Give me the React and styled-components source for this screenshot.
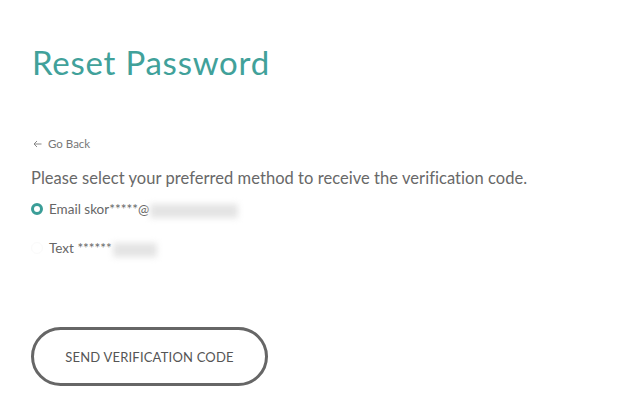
import React from 'react';
import styled, { createGlobalStyle } from 'styled-components';

const GlobalStyle = createGlobalStyle`
  html, body {
    margin: 0;
    padding: 0;
    background: #fff;
  }
  body {
    font-family: Lato, "Open Sans", sans-serif;
    color: #666;
  }
`;

const Page = styled.div`
  width: 640px;
  height: 409px;
  box-sizing: border-box;
  padding: 40px 0 0 31px;
  display: flex;
  flex-direction: column;
  overflow: hidden;
`;

const Title = styled.h1`
  margin: 0 0 0 1px;
  font-size: 33px;
  font-weight: 400;
  line-height: 44px;
  color: #41a19a;
  letter-spacing: 0.75px;
`;

const BackLink = styled.a`
  margin: 52px 0 0 2px;
  display: flex;
  align-items: center;
  gap: 6px;
  font-size: 11.5px;
  line-height: 16px;
  color: #777;
  text-decoration: none;
`;

const Intro = styled.p`
  margin: 15px 0 0;
  font-size: 16.5px;
  line-height: 22px;
  color: #686868;
  letter-spacing: 0.05px;
`;

const Options = styled.div`
  display: flex;
  flex-direction: column;
  gap: 19px;
  margin-top: 10px;
`;

const Option = styled.label`
  display: flex;
  align-items: center;
  gap: 6px;
  font-size: 13.5px;
  line-height: 20px;
  color: #666;
`;

const Radio = styled.span`
  width: 12px;
  height: 12px;
  box-sizing: border-box;
  border-radius: 50%;
  border: ${p => (p.checked ? '3px solid #3a9d97' : '1px solid #fafafa')};
  background: #fff;
  flex: none;
`;

const Masked = styled.span`
  display: inline-block;
  width: ${p => p.w}px;
  height: 14px;
  margin-left: 1px;
  background: #e4e4e4;
  filter: blur(3px);
  vertical-align: middle;
`;

const SendButton = styled.button`
  margin-top: 69px;
  width: 237px;
  height: 59px;
  box-sizing: border-box;
  border: 3px solid #666;
  border-radius: 30px;
  background: #fff;
  font-family: Lato, "Open Sans", sans-serif;
  font-size: 13px;
  color: #555;
  letter-spacing: 0.2px;
  cursor: pointer;
`;

export default function App() {
  return (
    <>
      <GlobalStyle />
      <Page>
        <Title>Reset Password</Title>
        <BackLink href="#">
          <svg width="9" height="8" viewBox="0 0 9 8" fill="none" stroke="#888" strokeWidth="1">
            <path d="M8.5 4H1M4 1L1 4l3 3" />
          </svg>
          Go Back
        </BackLink>
        <Intro>Please select your preferred method to receive the verification code.</Intro>
        <Options>
          <Option>
            <Radio checked />
            <span>Email skor*****@<Masked w={88} /></span>
          </Option>
          <Option>
            <Radio />
            <span>Text ******<Masked w={44} /></span>
          </Option>
        </Options>
        <SendButton>SEND VERIFICATION CODE</SendButton>
      </Page>
    </>
  );
}
